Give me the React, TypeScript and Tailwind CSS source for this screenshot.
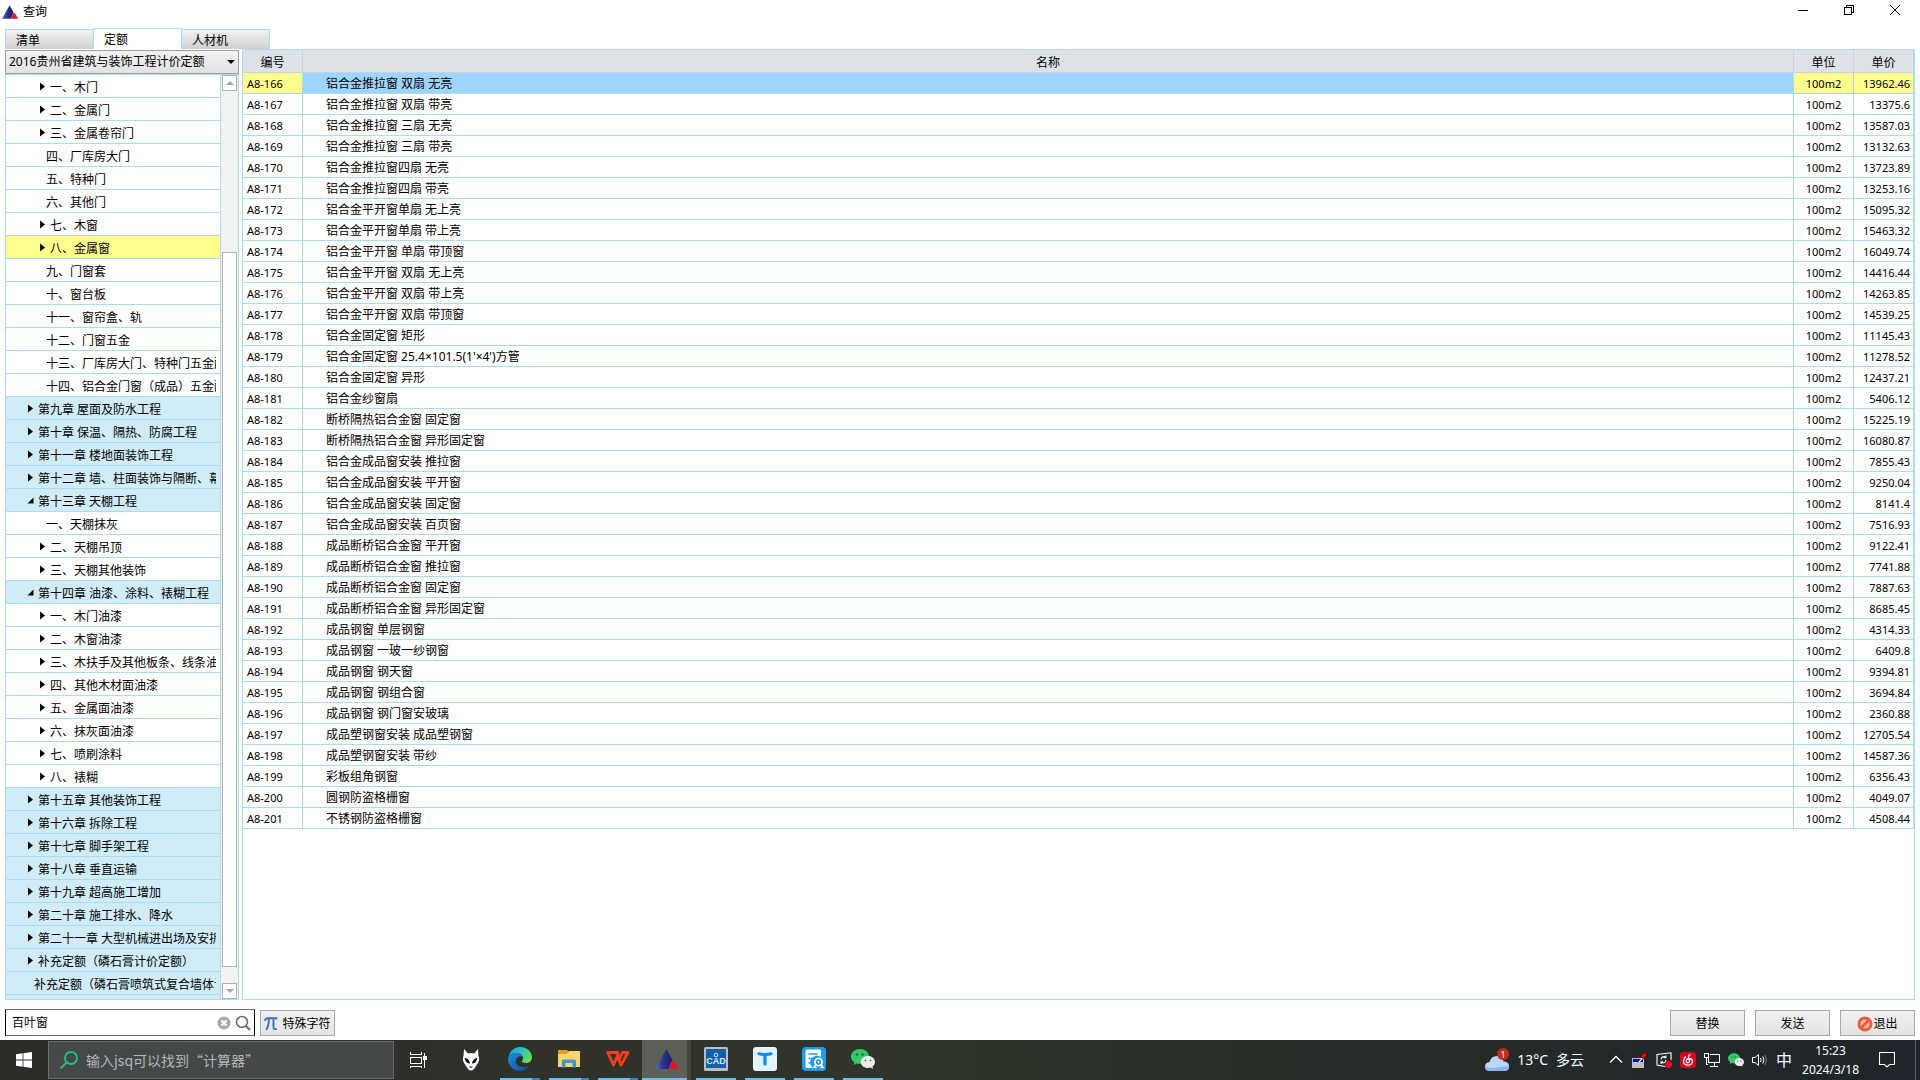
import { useState, type ReactNode } from 'react';
import { clsx } from 'clsx';

type TreeNode = {
  label: string;
  level: 1 | 2;
  state?: 'closed' | 'open';
};

const tree: TreeNode[] = [
  { label: '一、木门', level: 2, state: 'closed' },
  { label: '二、金属门', level: 2, state: 'closed' },
  { label: '三、金属卷帘门', level: 2, state: 'closed' },
  { label: '四、厂库房大门', level: 2 },
  { label: '五、特种门', level: 2 },
  { label: '六、其他门', level: 2 },
  { label: '七、木窗', level: 2, state: 'closed' },
  { label: '八、金属窗', level: 2, state: 'closed' },
  { label: '九、门窗套', level: 2 },
  { label: '十、窗台板', level: 2 },
  { label: '十一、窗帘盒、轨', level: 2 },
  { label: '十二、门窗五金', level: 2 },
  { label: '十三、厂库房大门、特种门五金配件', level: 2 },
  { label: '十四、铝合金门窗（成品）五金配件', level: 2 },
  { label: '第九章 屋面及防水工程', level: 1, state: 'closed' },
  { label: '第十章 保温、隔热、防腐工程', level: 1, state: 'closed' },
  { label: '第十一章 楼地面装饰工程', level: 1, state: 'closed' },
  { label: '第十二章 墙、柱面装饰与隔断、幕墙工程', level: 1, state: 'closed' },
  { label: '第十三章 天棚工程', level: 1, state: 'open' },
  { label: '一、天棚抹灰', level: 2 },
  { label: '二、天棚吊顶', level: 2, state: 'closed' },
  { label: '三、天棚其他装饰', level: 2, state: 'closed' },
  { label: '第十四章 油漆、涂料、裱糊工程', level: 1, state: 'open' },
  { label: '一、木门油漆', level: 2, state: 'closed' },
  { label: '二、木窗油漆', level: 2, state: 'closed' },
  { label: '三、木扶手及其他板条、线条油漆', level: 2, state: 'closed' },
  { label: '四、其他木材面油漆', level: 2, state: 'closed' },
  { label: '五、金属面油漆', level: 2, state: 'closed' },
  { label: '六、抹灰面油漆', level: 2, state: 'closed' },
  { label: '七、喷刷涂料', level: 2, state: 'closed' },
  { label: '八、裱糊', level: 2, state: 'closed' },
  { label: '第十五章 其他装饰工程', level: 1, state: 'closed' },
  { label: '第十六章 拆除工程', level: 1, state: 'closed' },
  { label: '第十七章 脚手架工程', level: 1, state: 'closed' },
  { label: '第十八章 垂直运输', level: 1, state: 'closed' },
  { label: '第十九章 超高施工增加', level: 1, state: 'closed' },
  { label: '第二十章 施工排水、降水', level: 1, state: 'closed' },
  { label: '第二十一章 大型机械进出场及安拆', level: 1, state: 'closed' },
  { label: '补充定额（磷石膏计价定额）', level: 1, state: 'closed' },
  { label: '补充定额（磷石膏喷筑式复合墙体计价）', level: 1 },
];

const quotas: [string, string, string][] = [
  ['A8-166', '铝合金推拉窗 双扇 无亮', '13962.46'],
  ['A8-167', '铝合金推拉窗 双扇 带亮', '13375.6'],
  ['A8-168', '铝合金推拉窗 三扇 无亮', '13587.03'],
  ['A8-169', '铝合金推拉窗 三扇 带亮', '13132.63'],
  ['A8-170', '铝合金推拉窗四扇 无亮', '13723.89'],
  ['A8-171', '铝合金推拉窗四扇 带亮', '13253.16'],
  ['A8-172', '铝合金平开窗单扇 无上亮', '15095.32'],
  ['A8-173', '铝合金平开窗单扇 带上亮', '15463.32'],
  ['A8-174', '铝合金平开窗 单扇 带顶窗', '16049.74'],
  ['A8-175', '铝合金平开窗 双扇 无上亮', '14416.44'],
  ['A8-176', '铝合金平开窗 双扇 带上亮', '14263.85'],
  ['A8-177', '铝合金平开窗 双扇 带顶窗', '14539.25'],
  ['A8-178', '铝合金固定窗 矩形', '11145.43'],
  ['A8-179', "铝合金固定窗 25.4×101.5(1'×4')方管", '11278.52'],
  ['A8-180', '铝合金固定窗 异形', '12437.21'],
  ['A8-181', '铝合金纱窗扇', '5406.12'],
  ['A8-182', '断桥隔热铝合金窗 固定窗', '15225.19'],
  ['A8-183', '断桥隔热铝合金窗 异形固定窗', '16080.87'],
  ['A8-184', '铝合金成品窗安装 推拉窗', '7855.43'],
  ['A8-185', '铝合金成品窗安装 平开窗', '9250.04'],
  ['A8-186', '铝合金成品窗安装 固定窗', '8141.4'],
  ['A8-187', '铝合金成品窗安装 百页窗', '7516.93'],
  ['A8-188', '成品断桥铝合金窗 平开窗', '9122.41'],
  ['A8-189', '成品断桥铝合金窗 推拉窗', '7741.88'],
  ['A8-190', '成品断桥铝合金窗 固定窗', '7887.63'],
  ['A8-191', '成品断桥铝合金窗 异形固定窗', '8685.45'],
  ['A8-192', '成品钢窗 单层钢窗', '4314.33'],
  ['A8-193', '成品钢窗 一玻一纱钢窗', '6409.8'],
  ['A8-194', '成品钢窗 钢天窗', '9394.81'],
  ['A8-195', '成品钢窗 钢组合窗', '3694.84'],
  ['A8-196', '成品钢窗 钢门窗安玻璃', '2360.88'],
  ['A8-197', '成品塑钢窗安装 成品塑钢窗', '12705.54'],
  ['A8-198', '成品塑钢窗安装 带纱', '14587.36'],
  ['A8-199', '彩板组角钢窗', '6356.43'],
  ['A8-200', '圆钢防盗格栅窗', '4049.07'],
  ['A8-201', '不锈钢防盗格栅窗', '4508.44'],
];

function AppLogo({ className }: { className?: string }) {
  return (
    <svg viewBox="0 0 24 20" className={className} aria-hidden="true">
      <defs>
        <linearGradient id="logoBlue" x1="0" y1="0" x2="1" y2="0">
          <stop offset="0" stopColor="#5a6cb8" />
          <stop offset="0.5" stopColor="#28308c" />
          <stop offset="1" stopColor="#1c1c6a" />
        </linearGradient>
      </defs>
      <path d="M11.500 0L0 20H14Q14.500 14 17.500 11Z" fill="url(#logoBlue)" />
      <path d="M17.500 12Q14.500 15 14.500 20H24L19.500 12Z" fill="#e0142a" />
    </svg>
  );
}

function TitleBar() {
  return (
    <header className="flex h-7 shrink-0 items-start justify-between">
      <div className="flex items-center gap-[5px] pl-0.5 pt-1">
        <AppLogo className="h-4 w-4" />
        <h1 className="text-xs leading-4">查询</h1>
      </div>
      <div className="flex pr-0.5">
        <button aria-label="最小化" className="flex h-5 w-[46px] items-center justify-center">
          <svg viewBox="0 0 10 10" className="h-2.5 w-2.5" shapeRendering="crispEdges">
            <path d="M0 5.500H10" stroke="#000" />
          </svg>
        </button>
        <button aria-label="还原" className="flex h-5 w-[46px] items-center justify-center">
          <svg viewBox="0 0 10 10" className="h-2.5 w-2.5" fill="none" stroke="#000" shapeRendering="crispEdges">
            <path d="M0.500 2.500H7.500V9.500H0.500Z M2.500 2V0.500H9.500V7.500H8" />
          </svg>
        </button>
        <button aria-label="关闭" className="flex h-5 w-[46px] items-center justify-center">
          <svg viewBox="0 0 10 10" className="h-2.5 w-2.5" stroke="#000">
            <path d="M0 0L10 10M10 0L0 10" />
          </svg>
        </button>
      </div>
    </header>
  );
}

function Tabs() {
  const [active, setActive] = useState('定额');
  return (
    <div role="tablist" className="flex h-[21px] shrink-0 items-end px-[5px]">
      {['清单', '定额', '人材机'].map((name) => (
        <button
          key={name}
          role="tab"
          aria-selected={name === active}
          onClick={() => setActive(name)}
          className={clsx(
            '-mr-px w-[89px] border border-b-0 border-[#aadcfa] pl-2.5 pt-0.5 text-left',
            name === active ? 'z-10 h-[21px] bg-white' : 'h-5 bg-linear-to-b from-[#f2f2f2] to-[#d0d0d0]',
          )}
        >
          {name}
        </button>
      ))}
    </div>
  );
}

function Twisty({ state }: { state: 'closed' | 'open' }) {
  return (
    <svg viewBox="0 0 8 10" className="h-2.5 w-2 shrink-0" aria-hidden="true">
      <path d={state === 'closed' ? 'M1 0.500V8.500L6 4.500Z' : 'M6.500 1.500V7.500H0.500Z'} fill="#000" />
    </svg>
  );
}

function ScrollArrow({ down }: { down?: boolean }) {
  return (
    <button
      aria-label={down ? '向下滚动' : '向上滚动'}
      className="flex h-4 w-full shrink-0 items-center justify-center border border-[#b0b0b0] bg-white"
    >
      <svg viewBox="0 0 8 4" className="h-1 w-2">
        <path d={down ? 'M0 0H8L4 4Z' : 'M0 4H8L4 0Z'} fill="#a8a8a8" />
      </svg>
    </button>
  );
}

function Sidebar() {
  const [selected, setSelected] = useState('八、金属窗');
  return (
    <aside className="flex w-[234px] shrink-0 flex-col">
      <div className="relative mt-px h-6 shrink-0">
        <select
          aria-label="定额库"
          className="h-full w-full appearance-none border border-[#a0a0a0] bg-linear-to-b from-[#f2f2f2] to-[#e2e2e2] pl-[3px]"
        >
          <option>2016贵州省建筑与装饰工程计价定额</option>
        </select>
        <svg viewBox="0 0 8 4" className="pointer-events-none absolute right-1 top-2.5 h-1 w-2">
          <path d="M0 0H8L4 4Z" fill="#000" />
        </svg>
      </div>
      <div className="flex min-h-0 flex-1 border border-[#aadcfa]">
        <ul className="min-w-0 flex-1 overflow-hidden border-r border-[#aadcfa] bg-[#cfecf8]">
          {tree.map(({ label, level, state }) => (
            <li key={label} className="h-[23px] border-b border-[#aadcfa]">
              <button
                onClick={() => setSelected(label)}
                className={clsx(
                  'flex h-full w-full items-center pr-1 pt-0.5 text-left',
                  level === 1 ? (state ? 'pl-[21px]' : 'pl-7') : state ? 'pl-[33px]' : 'pl-10',
                  label === selected ? 'bg-[#ffff8c]' : level === 1 ? 'bg-[#cfecf8]' : 'bg-white',
                )}
              >
                {state && <Twisty state={state} />}
                <span className={clsx('overflow-hidden whitespace-nowrap pt-0.5', state && 'ml-[3px]')}>{label}</span>
              </button>
            </li>
          ))}
        </ul>
        <div className="flex w-[17px] flex-col bg-[#f2f2f2] px-px">
          <ScrollArrow />
          <div className="grow-[161]" />
          <div className="grow-[715] border border-[#b0b0b0] bg-white" />
          <div className="grow-[16]" />
          <ScrollArrow down />
        </div>
      </div>
    </aside>
  );
}

function QuotaTable() {
  const [selected, setSelected] = useState('A8-166');
  return (
    <main className="min-w-0 flex-1 overflow-hidden border border-[#aadcfa]">
      <table className="w-full table-fixed border-separate border-spacing-0">
        <colgroup>
          <col className="w-[60px]" />
          <col />
          <col className="w-[60px]" />
          <col className="w-[60px]" />
        </colgroup>
        <thead>
          <tr className="h-[23px] bg-[#dee2e7]">
            {['编号', '名称', '单位', '单价'].map((name) => (
              <th
                key={name}
                className="border-b border-r border-[#c4d4e4] p-0 pt-1 font-normal last:border-r-[#aadcfa]"
              >
                {name}
              </th>
            ))}
          </tr>
        </thead>
        <tbody>
          {quotas.map(([code, name, price]) => {
            const on = code === selected;
            const cell = clsx('border-b border-r border-[#aadcfa] p-0 pt-0.5', on && 'bg-[#ffff8c]');
            return (
              <tr key={code} className="h-[21px] leading-[18px]" onClick={() => setSelected(code)}>
                <td className={clsx(cell, 'pl-1 text-[11px]')}>{code}</td>
                <td
                  className={clsx(
                    'truncate border-b border-r border-[#aadcfa] p-0 pl-[23px] pt-0.5',
                    on && 'bg-[#9ed5fe]',
                  )}
                >
                  {name}
                </td>
                <td className={clsx(cell, 'text-center text-[11px]')}>100m2</td>
                <td className={clsx(cell, 'pr-[3px] text-right text-[11px]')}>{price}</td>
              </tr>
            );
          })}
        </tbody>
      </table>
    </main>
  );
}

function PushButton({ children }: { children: ReactNode }) {
  return (
    <button className="flex h-[26px] w-[75px] items-center justify-center border border-[#a8a8a8] bg-linear-to-b from-[#f1f1f1] to-[#e3e3e3] pt-px">
      {children}
    </button>
  );
}

function ActionBar() {
  return (
    <div className="flex h-10 shrink-0 items-end justify-between px-[5px] pb-1">
      <div className="flex items-end gap-[5px]">
        <div className="flex h-[27px] w-[250px] items-center border border-[#707070] border-l-black border-r-black bg-white pl-1.5 pr-[3px]">
          <input aria-label="搜索" defaultValue="百叶窗" className="min-w-0 flex-1 bg-transparent outline-none" />
          <button aria-label="清除" className="mr-1">
            <svg viewBox="0 0 14 14" className="h-3.5 w-3.5">
              <circle cx="7" cy="7" r="6.500" fill="#a9a9a9" />
              <path d="M4.500 4.500l5 5M9.500 4.500l-5 5" stroke="#fff" strokeWidth="1.800" />
            </svg>
          </button>
          <button aria-label="查找">
            <svg viewBox="0 0 16 16" className="h-4 w-4" fill="none" stroke="#6a6a6a">
              <circle cx="7" cy="7" r="5.500" strokeWidth="1.500" />
              <path d="M11 11l4 4" strokeWidth="2" />
            </svg>
          </button>
        </div>
        <PushButton>
          <svg viewBox="0 0 13 13" className="mr-1 h-3.5 w-3.5" fill="none" stroke="#3f6fc4" strokeWidth="1.800">
            <path d="M0.500 3.500Q1.500 1.200 3.500 1.200H12.500M4.500 1.500Q4.500 9 2 12M8.800 1.500V9.500Q8.800 12 12 11" />
          </svg>
          特殊字符
        </PushButton>
      </div>
      <div className="flex gap-2.5">
        <PushButton>替换</PushButton>
        <PushButton>发送</PushButton>
        <PushButton>
          <svg viewBox="0 0 16 16" className="h-4 w-4">
            <circle cx="8" cy="8" r="7.500" fill="#ec5a3c" />
            <circle cx="8" cy="8" r="4.600" fill="#f6b8a6" />
            <path d="M4 12L12 4" stroke="#ec5a3c" strokeWidth="2.600" />
          </svg>
          退出
        </PushButton>
      </div>
    </div>
  );
}

function WeChat({ className }: { className?: string }) {
  return (
    <svg viewBox="0 0 24 20" className={className} aria-hidden="true">
      <path d="M9 0C4 0 0 3.300 0 7.500c0 2.400 1.300 4.400 3.300 5.800L2.500 16l3.200-1.600c1 .3 2.100.5 3.300.5 5 0 9-3.300 9-7.400S14 0 9 0Z" fill="#35c967" />
      <path d="M17 7c-4 0-7.200 2.600-7.200 6s3.200 6 7.200 6c.9 0 1.800-.1 2.600-.4L22 20l-.5-2.400c1.600-1.100 2.500-2.700 2.500-4.600C24 9.600 21 7 17 7Z" fill="#ececec" />
      <circle cx="6" cy="5.500" r="1.200" fill="#14713a" />
      <circle cx="11.500" cy="5.500" r="1.200" fill="#14713a" />
      <circle cx="14.500" cy="11.500" r="1" fill="#777" />
      <circle cx="19.500" cy="11.500" r="1" fill="#777" />
    </svg>
  );
}

type TaskProps = { label: string; children: ReactNode; bar?: 'one' | 'many'; active?: boolean };

function TaskButton({ label, children, bar, active }: TaskProps) {
  return (
    <button
      aria-label={label}
      className={clsx(
        'flex h-full w-[49px] flex-col items-center',
        active && 'border-r-4 border-[#44473e] bg-[#5d6055]',
      )}
    >
      <span className="flex flex-1 items-center">{children}</span>
      {bar && (
        <span className={clsx('flex h-0.5 bg-[#76b9ed]', active ? 'w-full' : 'w-10')}>
          {bar === 'many' && <span className="ml-auto w-2 bg-[#4c7ea8]" />}
        </span>
      )}
    </button>
  );
}

function Taskbar() {
  return (
    <footer className="flex h-10 shrink-0 items-stretch bg-linear-to-r from-[#2b2c28] via-[#31352a] via-45% to-[#1e2429] text-white">
      <button aria-label="开始" className="flex w-12 items-center justify-center">
        <svg viewBox="0 0 16 16" className="h-4 w-4" fill="#fff">
          <path d="M0 2.200L6.600 1.300V7.600H0ZM7.400 1.200L16 0V7.600H7.400ZM0 8.400H6.600V14.700L0 13.800ZM7.400 8.400H16V16L7.400 14.800Z" />
        </svg>
      </button>
      <label className="my-px flex w-[346px] items-center gap-2 border border-[#6a6c6c] bg-[#454848] pl-[11px]">
        <svg viewBox="0 0 18 18" className="h-[18px] w-[18px]" fill="none" stroke="#21bf7c" strokeWidth="2">
          <circle cx="11" cy="7" r="6" />
          <path d="M6.500 11.500L0.500 17.500" />
        </svg>
        <input
          aria-label="搜索"
          placeholder="输入jsq可以找到“计算器”"
          className="min-w-0 flex-1 bg-transparent font-['Noto_Sans_CJK_SC',sans-serif] text-sm outline-none placeholder:text-[#b4b6b6]"
        />
      </label>
      <button aria-label="任务视图" className="mr-[3px] flex w-[49px] items-center justify-center">
        <svg viewBox="0 0 17 16" className="h-4 w-[17px]" fill="none" stroke="#fff" shapeRendering="crispEdges">
          <path d="M0.500 0V2.500H11.500V0M0.500 5.500H11.500V11.500H0.500ZM0.500 16V14.500H11.500V16M14.500 1V4M14.500 8V16" />
          <path d="M13 4H16.500V8H13Z" fill="#fff" stroke="none" />
        </svg>
      </button>
      <TaskButton label="foobar2000">
        <svg viewBox="0 0 18 24" className="h-6 w-[18px]">
          <path d="M2 1L6 5.500Q9 4.500 12 5.500L16 1L16.500 8Q18 11 16 15L12 21Q9 24 6 21L2 15Q0 11 1.500 8Z" fill="#fff" />
          <path d="M2.500 10Q7.500 10.500 8 15.500Q3.500 15.500 2.500 10ZM15.500 10Q10.500 10.500 10 15.500Q14.500 15.500 15.500 10ZM7 18.500H11L9 20Z" fill="#111" />
        </svg>
      </TaskButton>
      <TaskButton label="Edge" bar="many">
        <svg viewBox="0 0 24 24" className="h-6 w-6">
          <defs>
            <linearGradient id="edgeTop" x1="0" y1="0" x2="1" y2="0.500">
              <stop offset="0" stopColor="#1b9de2" />
              <stop offset="0.550" stopColor="#30bfc8" />
              <stop offset="1" stopColor="#66dc50" />
            </linearGradient>
            <linearGradient id="edgeBottom" x1="0" y1="0" x2="1" y2="1">
              <stop offset="0" stopColor="#1b8fe0" />
              <stop offset="1" stopColor="#0c4a94" />
            </linearGradient>
          </defs>
          <path d="M0.500 9.500C2 4 6.500 0 12 0c6.600 0 12 4.800 12 10.200 0 3.600-2.800 5.800-6 5.800-2.800 0-4.500-1-4.200-2 .8-.8 1.200-1.700 1.200-2.800C15 8.200 12.200 6 8.800 6 5 6 2 7.500.5 9.500Z" fill="url(#edgeTop)" />
          <path d="M0 12C0 8.500 4 6 8.800 6c3.200 0 5.500 1.700 6.100 4C11 8 8 11 8 14.500c0 4.500 5.500 7.500 13.500 4C19.500 21.800 16 24 12 24 5.400 24 0 18.600 0 12Z" fill="url(#edgeBottom)" />
        </svg>
      </TaskButton>
      <TaskButton label="文件资源管理器" bar="many">
        <svg viewBox="0 0 22 20" className="h-5 w-[22px]">
          <path d="M0 1H9L11 3V6H0Z" fill="#e0a020" />
          <path d="M0 5H9L11 2H22V18H0Z" fill="#fbd667" />
          <path d="M4 18V12Q4 10.500 5.500 10.500H16.500Q18 10.500 18 12V18.500H14.500V14H7.500V18.500H4Z" fill="#3f97d8" />
        </svg>
      </TaskButton>
      <TaskButton label="WPS" bar="many">
        <svg viewBox="0 0 24 16" className="h-4 w-6" fill="none" stroke="#ff3b20" strokeWidth="2.800" strokeLinejoin="round">
          <path d="M12.500 1.500H1.800L7.500 14L12.800 1.500M11.500 6L15 14L22 1.500H16.500L13 9" />
        </svg>
      </TaskButton>
      <TaskButton label="计价软件" bar="one" active>
        <AppLogo className="ml-1 h-5 w-6" />
      </TaskButton>
      <TaskButton label="CAD" bar="one">
        <svg viewBox="0 0 24 24" className="h-6 w-6">
          <rect width="24" height="24" rx="1.500" fill="#b9bfc4" />
          <rect x="2" y="2" width="20" height="19" fill="#1460ad" />
          <text x="12" y="17" textAnchor="middle" fontSize="9" fontWeight="700" fill="#d4e4f2" fontFamily="Liberation Sans">
            CAD
          </text>
          <circle cx="12" cy="8" r="1.800" fill="none" stroke="#d4e4f2" />
        </svg>
      </TaskButton>
      <TaskButton label="T" bar="one">
        <svg viewBox="0 0 24 24" className="h-6 w-6">
          <rect width="24" height="24" rx="3" fill="#e3f3fd" />
          <path d="M6 6.800Q12 8.500 18 6.800M12 8V17" stroke="#128bf0" strokeWidth="3.200" strokeLinecap="round" fill="none" />
        </svg>
      </TaskButton>
      <TaskButton label="文档" bar="one">
        <svg viewBox="0 0 24 24" className="h-6 w-6" fill="none">
          <rect width="24" height="24" rx="4" fill="#1b9cf5" />
          <path d="M5 2.500H17.500Q19 2.500 19 4V10A6 6 0 0 0 11 21H5Q3.500 21 3.500 19.500V4Q3.500 2.500 5 2.500Z" fill="#fff" />
          <path d="M6.500 7H15.500M6.500 11.500H11.500M6.500 16H10" stroke="#1b9cf5" strokeWidth="1.500" />
          <circle cx="16.500" cy="15" r="3.600" fill="#1b9cf5" stroke="#fff" strokeWidth="1.800" />
          <circle cx="16.500" cy="15" r="1" fill="#fff" />
          <path d="M13.500 18L12 20.500H14.500M19.500 18L21 20.500H18.500" stroke="#fff" strokeWidth="1.500" />
        </svg>
      </TaskButton>
      <TaskButton label="微信" bar="one">
        <WeChat className="h-5 w-6" />
      </TaskButton>

      {/* Weather and tray */}
      <div className="ml-auto flex items-center">
        <button className="flex items-center text-sm">
          <svg viewBox="0 0 24 24" className="mr-2 h-6 w-6">
            <path d="M5 23Q0 23 0 18.500Q0 14.500 4.500 14Q6 8 12 8Q17.500 8 18.500 13.500Q24 13.500 24 18.500Q24 23 19 23Z" fill="#bcd6f8" />
            <path d="M5 23Q0 23 0 18.500Q5 21 12 19.500Q18 18 24 18.500Q24 23 19 23Z" fill="#8fb6ee" />
            <circle cx="18" cy="6" r="6" fill="#c42b1c" />
            <text x="18" y="9.500" textAnchor="middle" fontSize="9" fill="#fff" fontFamily="Noto Sans">
              1
            </text>
          </svg>
          <span>13°C</span>
          <span className="ml-2">多云</span>
        </button>
        <div className="ml-6 flex items-center gap-2">
          <button aria-label="显示隐藏的图标" className="w-4">
            <svg viewBox="0 0 16 16" className="h-4 w-4" fill="none" stroke="#fff" strokeWidth="1.300">
              <path d="M2 10.500L8 4.500L14 10.500" />
            </svg>
          </button>
          <svg viewBox="0 0 16 16" className="h-4 w-4">
            <rect x="0" y="6" width="12" height="10" fill="#c0c0c0" />
            <rect x="1" y="7" width="10" height="3" fill="#0000d8" />
            <path d="M7 10L11 5.500" stroke="#fff" strokeWidth="1.200" />
            <path d="M8 4.500L12.500 0.500L15.500 2L12 7Z" fill="#f00" stroke="#000" strokeWidth="0.600" />
          </svg>
          <svg viewBox="0 0 16 16" className="h-4 w-4" fill="none" stroke="#fff" strokeWidth="1.100">
            <path d="M9 14.500L1 13V2.500L15 0.800V8" />
            <path d="M5 7.500Q5.500 4.500 8.500 4.500L10 5.500M10 3.500V5.800H7.800M10 8Q9.500 11 6.500 11L5 10M5 12V9.800H7.200" />
            <circle cx="12.500" cy="12.500" r="3.500" fill="#e81123" stroke="none" />
          </svg>
          <svg viewBox="0 0 16 16" className="h-4 w-4" fill="none" stroke="#fff" strokeWidth="1.300">
            <rect width="16" height="16" rx="3" fill="#dd001b" stroke="none" />
            <path d="M10.500 3Q8.500 2.500 8.500 4.500L9.500 9Q9.500 10.800 8 10.800Q6.300 10.800 6.300 9Q6.500 6.800 9 6.500Q12.500 6.800 12.500 9.500Q12 13.200 8 13.200Q3.500 13 3.500 9Q3.500 6 6 4.500" />
          </svg>
          <svg viewBox="0 0 16 16" className="h-4 w-4" fill="none" stroke="#fff" shapeRendering="crispEdges">
            <path d="M6 2.500H15.500V10.500H4.500V6M10.500 11V14.500M6 14.500H14M0.500 1.500H4.500V5.500H0.500ZM2.500 6V12.500H4" />
          </svg>
          <WeChat className="h-4 w-4" />
          <svg viewBox="0 0 16 16" className="h-4 w-4" fill="none" stroke="#fff">
            <path d="M0.500 5.500H3L6.500 2.500V13.500L3 10.500H0.500Z" />
            <path d="M8.500 6Q9.800 8 8.500 10" />
            <path d="M10.800 4.500Q13 8 10.800 11.500" />
            <path d="M13 3Q16 8 13 13" stroke="#777b7e" />
          </svg>
          <button className="text-base leading-5">中</button>
        </div>
        <time className="ml-2.5 text-center text-xs leading-[19px]">
          15:23
          <br />
          2024/3/18
        </time>
        <button aria-label="通知" className="mx-5">
          <svg viewBox="0 0 16 16" className="h-4 w-4" fill="none" stroke="#fff" strokeWidth="1.100">
            <path d="M0.500 0.500H15.500V12.500H10.500L8 15L5.500 12.500H0.500Z" />
          </svg>
        </button>
        <div className="mr-1 h-10 w-px bg-[#5c6063]" />
      </div>
    </footer>
  );
}

export default function App() {
  return (
    <div className="flex h-screen flex-col overflow-hidden bg-white font-['Noto_Sans','Noto_Sans_CJK_SC',sans-serif] text-xs text-black">
      <TitleBar />
      <Tabs />
      <div className="flex min-h-0 flex-1 gap-[3px] px-[5px]">
        <Sidebar />
        <QuotaTable />
      </div>
      <ActionBar />
      <Taskbar />
    </div>
  );
}
